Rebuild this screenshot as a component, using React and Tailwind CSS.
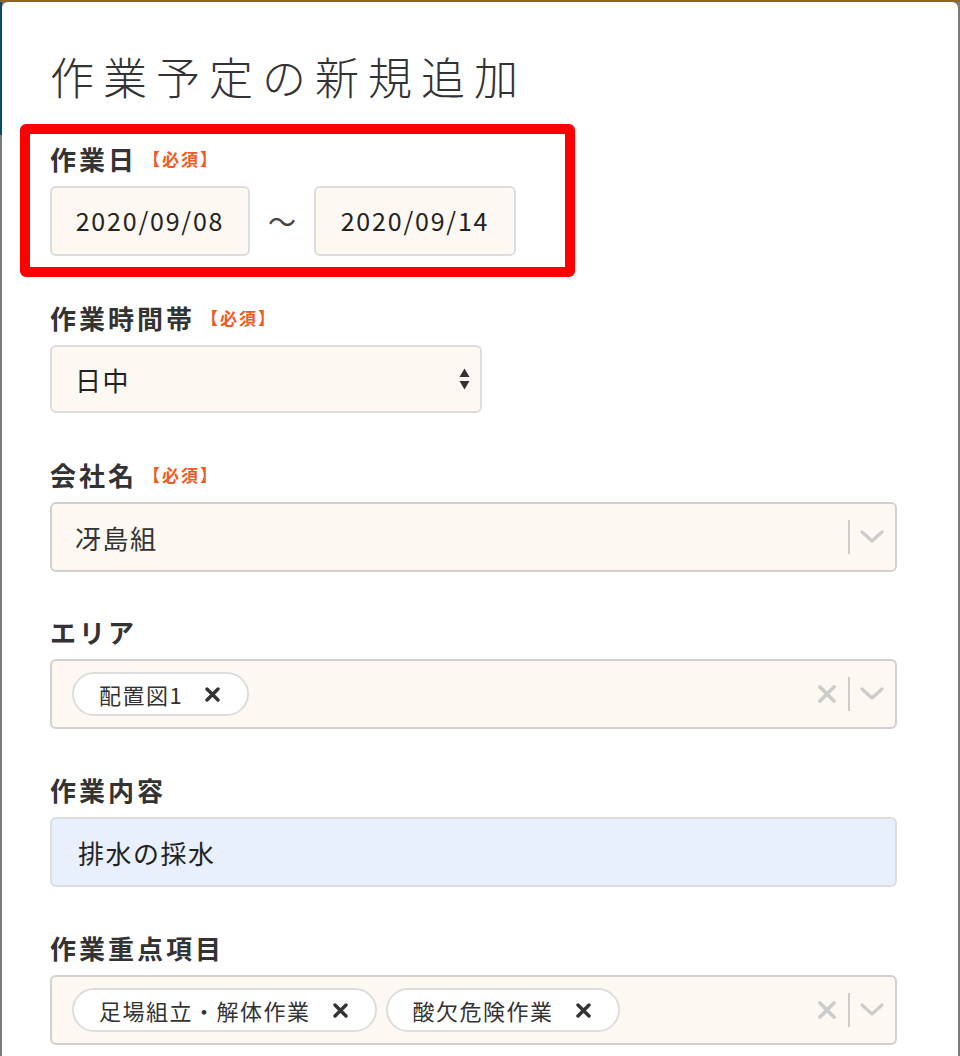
import React from "react";

const FONT = "font-['Noto_Sans_CJK_JP','Noto_Sans',sans-serif]";

function Req() {
  return (
    <span className="ml-[6px] text-[17px] font-bold tracking-[2px] text-[#f15a24]">
      【必須】
    </span>
  );
}

function Label({ children, req }) {
  return (
    <div className="mb-[12px] flex h-[30px] items-center text-[26px] font-bold leading-[30px] tracking-[3px] text-[#333]">
      <span>{children}</span>
      {req && <Req />}
    </div>
  );
}

function Chevron() {
  return (
    <svg width="24" height="14" viewBox="0 0 24 14" className="shrink-0">
      <polyline points="2,2 12,11 22,2" fill="none" stroke="#cccccc" strokeWidth="3.2" strokeLinecap="round" strokeLinejoin="round" />
    </svg>
  );
}

function ClearX() {
  return (
    <svg width="18" height="18" viewBox="0 0 18 18" className="shrink-0">
      <path d="M2 2 L16 16 M16 2 L2 16" stroke="#cccccc" strokeWidth="3.8" strokeLinecap="round" />
    </svg>
  );
}

function ChipX() {
  return (
    <svg width="15" height="15" viewBox="0 0 15 15" className="shrink-0">
      <path d="M2 2 L13 13 M13 2 L2 13" stroke="#333333" strokeWidth="3.4" strokeLinecap="round" />
    </svg>
  );
}

function Sep() {
  return <div className="h-[34px] w-[2px] shrink-0 bg-[#cccccc]" />;
}

function Chip({ children }) {
  return (
    <div className="flex h-[44px] items-center gap-[22px] rounded-full border-2 border-[#dddddd] bg-white pl-[25px] pr-[27px] text-[22px] tracking-[1.5px] text-[#333]">
      <span>{children}</span>
      <ChipX />
    </div>
  );
}

export default function App() {
  return (
    <div className={`${FONT} flex h-[1056px] w-[960px] flex-col overflow-hidden bg-[#7b7b7b]`}>
      <div className="h-[2px] shrink-0 bg-[#8b6a14]" />
      <div className="flex flex-1">
        <div className="flex w-[2px] shrink-0 flex-col">
          <div className="h-[133px] bg-[#0b4a6f]" />
          <div className="flex-1 bg-[#7b7b7b]" />
        </div>
        <div className="mr-[2px] flex-1 rounded-t-[6px] bg-white pl-[48px] pt-[50px]">
          <h1 className="h-[48px] text-[44px] font-light leading-[48px] tracking-[9px] text-[#333]">
            作業予定の新規追加
          </h1>

          <div className="w-[847px]">
            {/* 作業日 */}
            <div className="ml-[-30px] mt-[24px] w-[555px] rounded-[6px] border-[10px] border-[#ff0000] px-[20px] pb-[11px] pt-[10px]">
              <Label req>作業日</Label>
              <div className="mt-[1px] flex items-center">
                <div className="flex h-[70px] w-[200px] items-center justify-center rounded-[6px] border-2 border-[#dddddd] bg-[#fdf8f2] text-[25px] tracking-[1.8px] text-[#222]">
                  2020/09/08
                </div>
                <div className="flex w-[64px] justify-center text-[28px] text-[#444]">〜</div>
                <div className="flex h-[70px] w-[202px] items-center justify-center rounded-[6px] border-2 border-[#dddddd] bg-[#fdf8f2] text-[25px] tracking-[1.8px] text-[#222]">
                  2020/09/14
                </div>
              </div>
            </div>

            {/* 作業時間帯 */}
            <div className="mt-[26px]">
              <Label req>作業時間帯</Label>
              <div className="flex h-[68px] w-[432px] items-center justify-between rounded-[6px] border-2 border-[#dddddd] bg-[#fdf8f2] pl-[23px] pr-[10px] text-[26px] tracking-[1.5px] text-[#222]">
                <span>日中</span>
                <svg width="11" height="24" viewBox="0 0 11 24">
                  <polygon points="0.5,10 5.5,1.5 10.5,10" fill="#333" />
                  <polygon points="0.5,14 10.5,14 5.5,22.5" fill="#333" />
                </svg>
              </div>
            </div>

            {/* 会社名 */}
            <div className="mt-[47px]">
              <Label req>会社名</Label>
              <div className="flex h-[70px] items-center rounded-[6px] border-2 border-[#d0d0d0] bg-[#fdf8f2] pl-[23px] pr-[11px]">
                <span className="flex-1 text-[26px] tracking-[1.5px] text-[#333]">冴島組</span>
                <Sep />
                <div className="ml-[10px]">
                  <Chevron />
                </div>
              </div>
            </div>

            {/* エリア */}
            <div className="mt-[45px]">
              <Label>エリア</Label>
              <div className="flex h-[70px] items-center rounded-[6px] border-2 border-[#d0d0d0] bg-[#fdf8f2] pl-[20px] pr-[11px]">
                <div className="flex flex-1 items-center gap-[9px]">
                  <Chip>配置図1</Chip>
                </div>
                <div className="mr-[12px]">
                  <ClearX />
                </div>
                <Sep />
                <div className="ml-[10px]">
                  <Chevron />
                </div>
              </div>
            </div>

            {/* 作業内容 */}
            <div className="mt-[46px]">
              <Label>作業内容</Label>
              <div className="flex h-[70px] items-center rounded-[6px] border-2 border-[#dddddd] bg-[#e8f0fe] pl-[26px] text-[26px] tracking-[1.5px] text-[#222]">
                排水の採水
              </div>
            </div>

            {/* 作業重点項目 */}
            <div className="mt-[46px]">
              <Label>作業重点項目</Label>
              <div className="flex h-[70px] items-center rounded-[6px] border-2 border-[#d0d0d0] bg-[#fdf8f2] pl-[20px] pr-[11px]">
                <div className="flex flex-1 items-center gap-[9px]">
                  <Chip>足場組立・解体作業</Chip>
                  <Chip>酸欠危険作業</Chip>
                </div>
                <div className="mr-[12px]">
                  <ClearX />
                </div>
                <Sep />
                <div className="ml-[10px]">
                  <Chevron />
                </div>
              </div>
            </div>
          </div>
        </div>
      </div>
    </div>
  );
}
